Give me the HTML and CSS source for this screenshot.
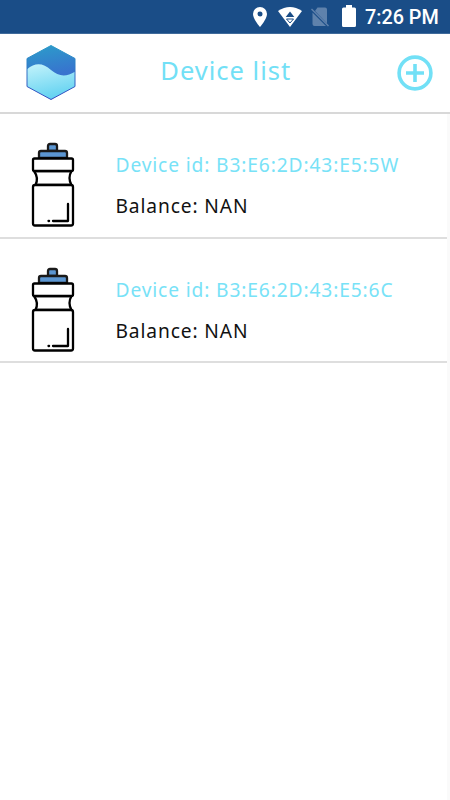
FILE: index.html
```html
<!DOCTYPE html>
<html lang="en">
<head>
    <meta charset="UTF-8">
    <meta name="viewport" content="width=device-width, initial-scale=1.0">
    <title>Device list</title>
    <link rel="stylesheet" href="styles.css">
</head>
<body>
    <!-- Bottle drawing shared by the rows -->
    <svg class="symbols" width="0" height="0">
        <symbol id="bottle" viewBox="0 0 44 86">
            <g stroke="#000" stroke-width="2.3" stroke-linejoin="round" stroke-linecap="round">
                <path d="M17 9V4q0-2 2-2h5q2 0 2 2v5z" fill="#5b96d2" stroke="#1a1a1a"/>
                <path d="M8 16v-5q0-2 2-2h24q2 0 2 2v5z" fill="#5b96d2" stroke="#1a1a1a"/>
                <path d="M3 29q5 7 1.5 14h36q-4-7 0-14z" fill="#fff"/>
                <rect x="2" y="16.5" width="40" height="12.5" rx="1.5" fill="#fff"/>
                <rect x="2" y="43" width="40" height="40.5" rx="2" fill="#fff"/>
                <path d="M37 62v17H22M17.5 79h.6" fill="none"/>
            </g>
        </symbol>
    </svg>

    <div class="status-bar">
        <svg class="pin" width="14" height="20" viewBox="0 0 14 20">
            <path fill="#fff" fill-rule="evenodd" d="M7 0a7 7 0 0 0-7 7c0 5 7 13 7 13s7-8 7-13a7 7 0 0 0-7-7zm0 4.5a2.5 2.5 0 1 1 0 5 2.5 2.5 0 0 1 0-5z"/>
        </svg>
        <svg class="wifi" width="24" height="20" viewBox="0 0 24 20">
            <path fill="#fff" d="M0 4Q12-4 24 4L12 20z"/>
            <path fill="#1a4d87" d="M12 4.5 16.3 10H7.7z"/>
            <path fill="none" stroke="#1a4d87" d="M8.5 12h7L12 16z"/>
        </svg>
        <svg class="no-sim" width="18" height="20" viewBox="0 0 18 20">
            <path fill="#5f82ac" d="M6.5.5H14q2 0 2 2v14L4 4zM1.5 5.5 15 19H3.5q-2 0-2-2z"/>
            <path fill="none" stroke="#5f82ac" stroke-width="1.5" d="M.5 2 17.5 19"/>
        </svg>
        <svg class="battery" width="14" height="22" viewBox="0 0 14 22">
            <path fill="#fff" d="M4 0h6v2.500h2.500Q14 2.500 14 4v16.500Q14 22 12.500 22h-11Q0 22 0 20.500V4Q0 2.500 1.500 2.500H4z"/>
        </svg>
        <span class="time">7:26 PM</span>
    </div>

    <header class="header">
        <svg class="logo" width="50" height="56" viewBox="0 0 50 56">
            <defs>
                <linearGradient id="deep" x1="0" y1="0" x2=".3" y2="1">
                    <stop offset="0" stop-color="#2b9fca"/>
                    <stop offset="1" stop-color="#3873ce"/>
                </linearGradient>
                <linearGradient id="light" x1="0" y1="0" x2=".3" y2="1">
                    <stop offset="0" stop-color="#c4f3fb"/>
                    <stop offset="1" stop-color="#62d2f1"/>
                </linearGradient>
                <linearGradient id="edge" x1="0" y1="0" x2="0" y2="1">
                    <stop offset="0" stop-color="#2b9bc8"/>
                    <stop offset="1" stop-color="#3346c0"/>
                </linearGradient>
                <clipPath id="hex"><path d="M25 .5 49 13.500V41.500L25 54.500 1 41.500V13.500z"/></clipPath>
            </defs>
            <g clip-path="url(#hex)">
                <path fill="url(#deep)" d="M0 0h50v32H0z"/>
                <path fill="url(#light)" d="M0 25C9 17 17 18 25 25S41 32 50 26v30H0z"/>
            </g>
            <path fill="none" stroke="url(#edge)" stroke-linejoin="round" d="M25 .5 49 13.500V41.500L25 54.500 1 41.500V13.500z"/>
        </svg>
        <h1>Device list</h1>
        <button class="add" aria-label="Add device">
            <svg width="36" height="36" viewBox="0 0 36 36" fill="none" stroke="#72e0f6">
                <circle cx="18" cy="18" r="15.9" stroke-width="3.6"/>
                <path stroke-width="3.6" d="M18 9v18M9 18h18"/>
            </svg>
        </button>
    </header>

    <main class="content">
        <ul class="devices">
            <li class="device">
                <svg class="bottle" width="44" height="86"><use href="#bottle"/></svg>
                <div class="info">
                    <p class="device-id">Device id: B3:E6:2D:43:E5:5W</p>
                    <p>Balance: NAN</p>
                </div>
            </li>
            <li class="device">
                <svg class="bottle" width="44" height="86"><use href="#bottle"/></svg>
                <div class="info">
                    <p class="device-id">Device id: B3:E6:2D:43:E5:6C</p>
                    <p>Balance: NAN</p>
                </div>
            </li>
        </ul>
    </main>
</body>
</html>
```
FILE: styles.css
```css
* {
    box-sizing: border-box;
}
body {
    margin: 0;
    min-height: 100vh;
    display: flex;
    flex-direction: column;
    background-color: #fafafa;
    font-family: "Noto Sans", "Open Sans", sans-serif;
}
.symbols {
    position: absolute;
}
.status-bar {
    display: flex;
    align-items: center;
    height: 34px;
    padding-left: 253px;
    background-color: #1a4d87;
    border-bottom: 1px solid #406b9b;
    color: white;
}
.status-bar svg {
    flex: none;
}
.wifi {
    margin-left: 11px;
}
.no-sim {
    margin-left: 9px;
}
.battery {
    margin: 0 0 2px 13px;
}
.time {
    margin: 3px 0 0 9px;
    font: 500 19.8px/24px Roboto, sans-serif;
    white-space: nowrap;
}
.header {
    display: flex;
    align-items: center;
    justify-content: space-between;
    height: 80px;
    padding: 0 17px 1px 25.5px;
    background-color: white;
    border-bottom: 2px solid #d8d8d8;
}
h1 {
    margin: 0 0 5px;
    padding-right: 21px;
    color: #72e0f6;
    font-size: 25.5px;
    font-weight: 400;
    line-height: 36px;
    letter-spacing: 1px;
}
.add {
    width: 36px;
    height: 36px;
    padding: 0;
    border: none;
    background: none;
    cursor: pointer;
}
.add svg {
    display: block;
}
.content {
    flex: 1;
    margin-right: 3px;
    background-color: white;
}
.devices {
    margin: 0;
    padding: 0;
    list-style: none;
}
.device {
    display: flex;
    height: 124.5px;
    padding: 28px 0 0 31px;
    border-bottom: 2px solid #dedede;
}
.info {
    margin-left: 40.5px;
    padding-top: 10px;
}
.info p {
    margin: 0 0 15px;
    color: #111;
    font-size: 19.2px;
    line-height: 26px;
    letter-spacing: 0.87px;
    white-space: nowrap;
}
.info .device-id {
    color: #78e2f7;
}
```
